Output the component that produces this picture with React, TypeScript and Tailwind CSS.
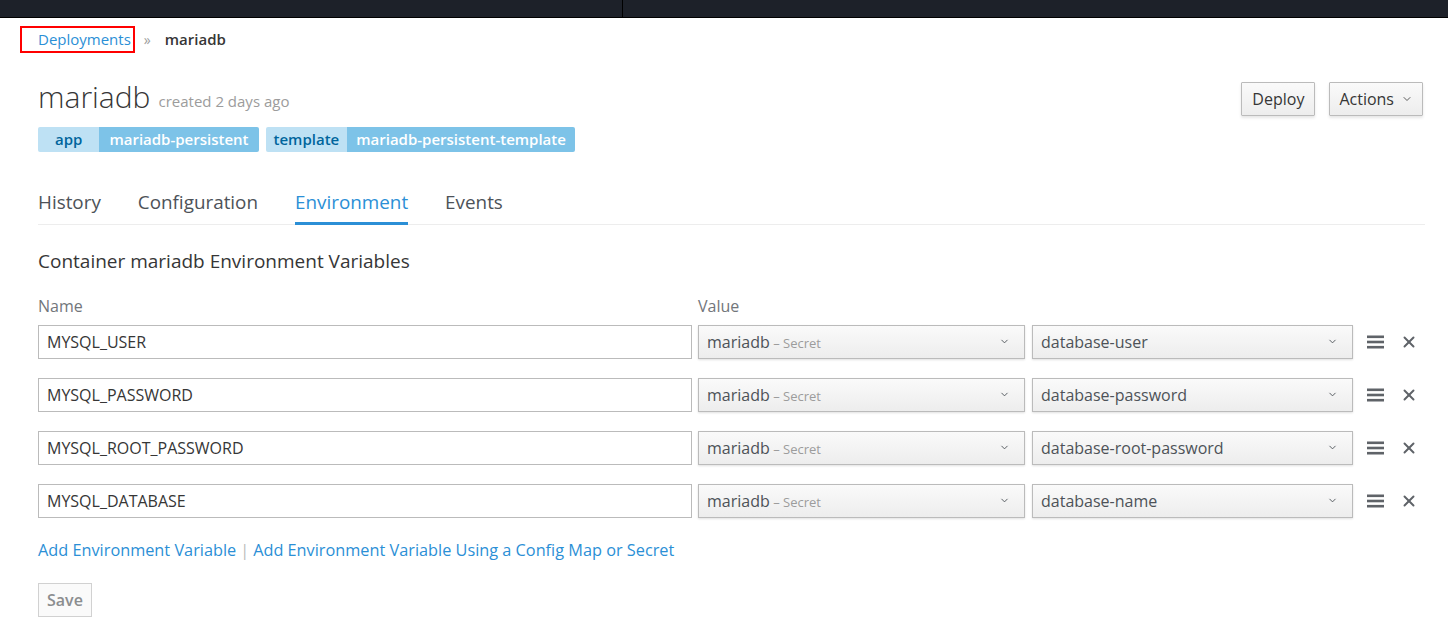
import { ChevronDown, X } from 'lucide-react';

interface EnvVar {
  name: string;
  secret: string;
  key: string;
}

const envVars: EnvVar[] = [
  { name: 'MYSQL_USER', secret: 'mariadb', key: 'database-user' },
  { name: 'MYSQL_PASSWORD', secret: 'mariadb', key: 'database-password' },
  { name: 'MYSQL_ROOT_PASSWORD', secret: 'mariadb', key: 'database-root-password' },
  { name: 'MYSQL_DATABASE', secret: 'mariadb', key: 'database-name' },
];

const tabs = ['History', 'Configuration', 'Environment', 'Events'];

function Hamburger() {
  return (
    <svg width="17" height="14" viewBox="0 0 17 14" className="text-[#5f6368]">
      <rect x="0" y="0.5" width="17" height="2.6" fill="currentColor" />
      <rect x="0" y="5.7" width="17" height="2.6" fill="currentColor" />
      <rect x="0" y="10.9" width="17" height="2.6" fill="currentColor" />
    </svg>
  );
}

export default function App() {
  return (
    <div
      className="min-h-[632px] bg-white text-[#363636]"
      style={{ fontFamily: '"Open Sans", "Liberation Sans", sans-serif' }}
    >
      <div className="h-[18px] bg-[#1d2129] border-b border-black flex">
        <div className="w-[623px] border-r border-black" />
      </div>

      <div className="pl-[20px] pr-[23px]">
        <div className="flex items-center h-[27px] mt-[8px] text-[15px]">
          <div className="border-2 border-[#ff0000] h-[27px] pl-[16px] pr-[2px] flex items-center">
            <span className="text-[#2b8fd6]">Deployments</span>
          </div>
          <span className="text-[#9c9c9c] ml-[9px] mr-[14px] text-[14px]">»</span>
          <span className="font-semibold text-[#363636]">mariadb</span>
        </div>

        <div className="pl-[18px]">
          <div className="flex items-start justify-between mt-[27px]">
            <div>
              <div className="flex gap-[8px] h-[34px] items-center">
                <h1 className="text-[30px] font-light leading-none text-[#363636]">mariadb</h1>
                <span className="text-[15px] text-[#9c9c9c] mt-[8px]">created 2 days ago</span>
              </div>
              <div className="flex gap-[7px] mt-[13px] text-[15px] font-semibold leading-none">
                <div className="flex rounded-[2px] overflow-hidden h-[25px]">
                  <span className="bg-[#bee1f4] text-[#00659c] px-[17px] flex items-center">app</span>
                  <span className="bg-[#7dc3e8] text-white px-[10px] flex items-center">mariadb-persistent</span>
                </div>
                <div className="flex rounded-[2px] overflow-hidden h-[25px]">
                  <span className="bg-[#bee1f4] text-[#00659c] px-[8px] flex items-center">template</span>
                  <span className="bg-[#7dc3e8] text-white px-[9px] flex items-center">mariadb-persistent-template</span>
                </div>
              </div>
            </div>
            <div className="flex gap-[14px] mr-[2px] mt-[2px]">
              <button className="h-[34px] px-[10px] text-[16px] text-[#363636] border border-[#bbbbbb] rounded-[1px] bg-gradient-to-b from-[#fafafa] to-[#ededed] shadow-[0_2px_3px_rgba(0,0,0,0.1)]">
                Deploy
              </button>
              <button className="h-[34px] px-[9px] text-[16px] text-[#363636] border border-[#bbbbbb] rounded-[1px] bg-gradient-to-b from-[#fafafa] to-[#ededed] shadow-[0_2px_3px_rgba(0,0,0,0.1)] flex items-center gap-[7px]">
                Actions
                <ChevronDown size={12} strokeWidth={1.6} />
              </button>
            </div>
          </div>

          <div className="flex gap-[37px] mt-[36px] border-b border-[#ededed] text-[18.85px]">
            {tabs.map(tab => (
              <div
                key={tab}
                className={
                  tab === 'Environment'
                    ? 'pb-[5px] text-[#2b8fd6] border-b-[3px] border-[#2b8fd6] -mb-[1px]'
                    : 'pb-[8px] text-[#4d5258]'
                }
              >
                {tab}
              </div>
            ))}
          </div>

          <h2 className="text-[19px] text-[#363636] mt-[22px]">Container mariadb Environment Variables</h2>

          <div className="flex mt-[18px] text-[16px] text-[#72767b]">
            <span className="w-[660px]">Name</span>
            <span>Value</span>
          </div>

          <div className="flex flex-col gap-[19px] mt-[7px]">
            {envVars.map(v => (
              <div key={v.name} className="flex items-center h-[34px]">
                <div className="w-[654px] h-[34px] border border-[#bbbbbb] flex items-center px-[8px] text-[16px] text-[#363636]">
                  {v.name}
                </div>
                <div className="w-[327px] h-[34px] ml-[6px] border border-[#bbbbbb] bg-gradient-to-b from-[#fafafa] to-[#ededed] shadow-[0_1px_2px_rgba(0,0,0,0.12)] flex items-center justify-between pl-[8px] pr-[14px]">
                  <span className="text-[16px] text-[#4d5258]">
                    {v.secret}
                    <span className="text-[13px] text-[#9c9c9c]"> – Secret</span>
                  </span>
                  <ChevronDown size={11} strokeWidth={2} className="text-[#4d5258]" />
                </div>
                <div className="w-[321px] h-[34px] ml-[7px] border border-[#bbbbbb] bg-gradient-to-b from-[#fafafa] to-[#ededed] shadow-[0_1px_2px_rgba(0,0,0,0.12)] flex items-center justify-between pl-[8px] pr-[14px]">
                  <span className="text-[16px] text-[#4d5258]">{v.key}</span>
                  <ChevronDown size={11} strokeWidth={2} className="text-[#4d5258]" />
                </div>
                <div className="ml-[14px] flex items-center">
                  <Hamburger />
                </div>
                <div className="ml-[16px] flex items-center text-[#5f6368]">
                  <X size={18} strokeWidth={2.6} />
                </div>
              </div>
            ))}
          </div>

          <div className="mt-[20px] text-[16.3px] flex items-center">
            <span className="text-[#2b8fd6]">Add Environment Variable</span>
            <span className="text-[#bbbbbb] mx-[4px]">|</span>
            <span className="text-[#2b8fd6]">Add Environment Variable Using a Config Map or Secret</span>
          </div>

          <button className="mt-[21px] h-[34px] px-[8px] text-[16px] font-semibold text-[#8b8d8f] bg-[#fafafa] border border-[#d1d1d1]">
            Save
          </button>
        </div>
      </div>
    </div>
  );
}
